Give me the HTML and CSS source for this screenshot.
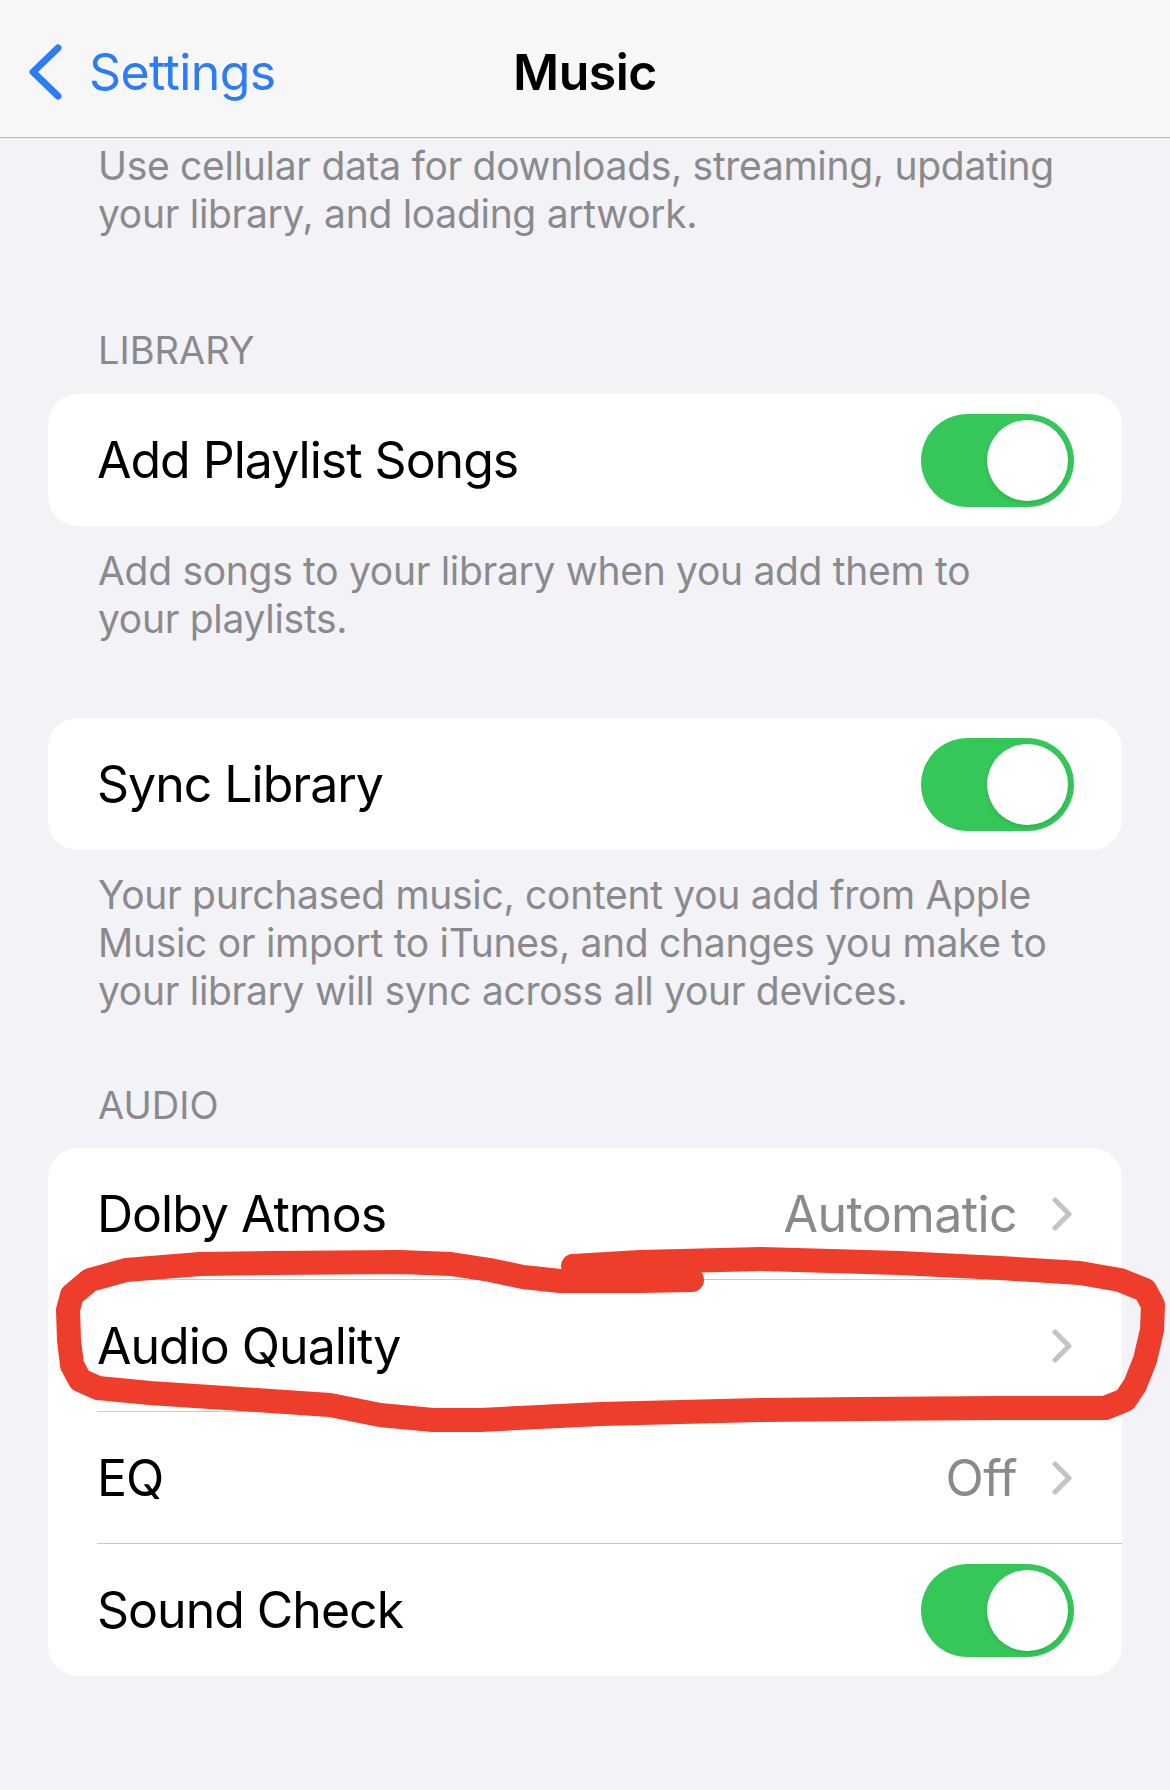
FILE: index.html
```html
<!DOCTYPE html>
<html lang="en">

<head>
    <meta charset="UTF-8">
    <meta name="viewport" content="width=device-width, initial-scale=1.0">
    <title>Music</title>
    <link rel="stylesheet" href="styles.css">
</head>

<body>
    <div class="nav">
        <div class="nav-back">
            <svg class="back-chevron" width="34" height="56" viewBox="0 0 34 56">
                <polyline points="30,4 5,28 30,52" />
            </svg>
            <span>Settings</span>
        </div>
        <div class="nav-title">Music</div>
        <div></div>
    </div>

    <div class="content">
        <p class="footer first">Use cellular data for downloads, streaming, updating<br>your library, and loading artwork.</p>

        <h2 class="section-header">Library</h2>
        <div class="group">
            <div class="row">
                <div class="row-inner">
                    <span class="label">Add Playlist Songs</span>
                    <span class="switch"><span class="knob"></span></span>
                </div>
            </div>
        </div>
        <p class="footer">Add songs to your library when you add them to<br>your playlists.</p>

        <div class="group spaced">
            <div class="row">
                <div class="row-inner">
                    <span class="label">Sync Library</span>
                    <span class="switch"><span class="knob"></span></span>
                </div>
            </div>
        </div>
        <p class="footer">Your purchased music, content you add from Apple<br>Music or import to iTunes, and changes you make to<br>your library will sync across all your devices.</p>

        <h2 class="section-header audio">Audio</h2>
        <div class="group">
            <div class="row">
                <div class="row-inner">
                    <span class="label">Dolby Atmos</span>
                    <span class="detail">Automatic</span>
                    <svg class="chevron" width="20" height="34" viewBox="0 0 20 34"><polyline points="3,3 17,17 3,31" /></svg>
                </div>
            </div>
            <div class="row">
                <div class="row-inner">
                    <span class="label">Audio Quality</span>
                    <span class="detail"></span>
                    <svg class="chevron" width="20" height="34" viewBox="0 0 20 34"><polyline points="3,3 17,17 3,31" /></svg>
                </div>
            </div>
            <div class="row">
                <div class="row-inner">
                    <span class="label">EQ</span>
                    <span class="detail">Off</span>
                    <svg class="chevron" width="20" height="34" viewBox="0 0 20 34"><polyline points="3,3 17,17 3,31" /></svg>
                </div>
            </div>
            <div class="row">
                <div class="row-inner">
                    <span class="label">Sound Check</span>
                    <span class="switch"><span class="knob"></span></span>
                </div>
            </div>
        </div>
    </div>

    <!-- hand drawn markup on top of the screenshot -->
    <svg class="markup" width="1170" height="1790" viewBox="0 0 1170 1790">
        <path d="M573 1266 L640 1262 L761 1259 L900 1263 L1000 1268 L1080 1273 L1120 1280 L1145 1290 L1153 1305
                 L1152 1330 L1145 1360 L1135 1385 L1125 1400 L1105 1408 L1000 1408 L860 1409 L761 1410
                 L600 1414 L480 1420 L433 1420 L380 1415 L330 1405 L256 1400 L150 1393 L98 1388 L80 1380
                 L72 1365 L69 1340 L68 1310 L72 1295 L90 1280 L126 1270 L200 1264 L271 1263 L400 1262
                 L451 1264 L490 1270 L523 1277 L560 1281 L640 1281 L692 1280" />
    </svg>
</body>

</html>
```

FILE: styles.css
```css
body {
    margin: 0;
    background-color: #f2f2f7;
    font-family: Inter, "Noto Sans", sans-serif;
    color: #000;
    position: relative;
    min-height: 1790px;
}

.nav {
    height: 138px;
    box-sizing: border-box;
    padding-top: 6px;
    background-color: #f7f7f7;
    border-bottom: 1.5px solid #b8b8bb;
    display: grid;
    grid-template-columns: 1fr auto 1fr;
    align-items: center;
}

.nav-back {
    display: flex;
    align-items: center;
    gap: 27px;
    padding-left: 28px;
    color: #2c7cf6;
    font-size: 50px;
    letter-spacing: -0.6px;
}

.back-chevron polyline {
    fill: none;
    stroke: #2c7cf6;
    stroke-width: 7;
    stroke-linecap: round;
    stroke-linejoin: round;
}

.nav-title {
    font-size: 50px;
    font-weight: 600;
    letter-spacing: -0.5px;
}

.footer {
    margin: 21px 0 0;
    padding: 0 40px 0 98px;
    font-size: 39px;
    line-height: 48px;
    color: #8a8a8e;
    letter-spacing: -0.3px;
}

.footer.first {
    margin-top: 4px;
}

.section-header {
    margin: 88px 0 20px;
    padding-left: 98px;
    font-size: 38px;
    line-height: 48px;
    font-weight: 400;
    text-transform: uppercase;
    color: #8a8a8e;
}

.section-header.audio {
    margin-top: 66px;
    margin-bottom: 19px;
}

.group {
    margin: 0 48px;
    background-color: #fff;
    border-radius: 30px;
    overflow: hidden;
}

.group.spaced {
    margin-top: 75px;
}

.row {
    padding-left: 49px;
}

.row-inner {
    height: 132px;
    box-sizing: border-box;
    padding-right: 48px;
    display: flex;
    align-items: center;
    border-bottom: 1px solid #c8c8cc;
}

.row:last-child .row-inner {
    border-bottom: none;
}

.label {
    flex: 1;
    font-size: 50px;
    letter-spacing: -1px;
}

.detail {
    font-size: 50px;
    letter-spacing: -0.6px;
    color: #8a8a8e;
    margin-right: 35px;
}

.chevron {
    margin-right: 2px;
}

.chevron polyline {
    fill: none;
    stroke: #c4c4c7;
    stroke-width: 5;
    stroke-linecap: round;
    stroke-linejoin: round;
}

.switch {
    width: 153px;
    height: 93px;
    box-sizing: border-box;
    padding: 6px;
    border-radius: 47px;
    background-color: #35c759;
    display: flex;
    justify-content: flex-end;
}

.knob {
    width: 81px;
    height: 81px;
    border-radius: 50%;
    background-color: #fff;
    box-shadow: 0 2px 4px rgba(0, 0, 0, 0.12);
}

.markup {
    position: absolute;
    top: 0;
    left: 0;
    pointer-events: none;
}

.markup path {
    fill: none;
    stroke: #ee3d2a;
    stroke-width: 24;
    stroke-linecap: round;
    stroke-linejoin: round;
}
```
